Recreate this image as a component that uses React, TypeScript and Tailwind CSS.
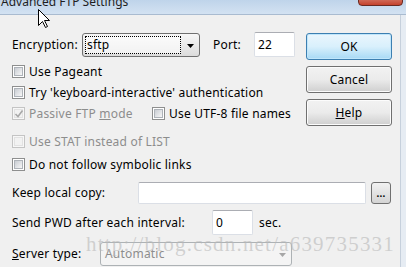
import React from "react";

function CheckBox({ checked, disabled }: { checked?: boolean; disabled?: boolean }) {
  return (
    <span
      className={`relative flex h-[13px] w-[13px] shrink-0 items-center justify-center border ${
        disabled ? "border-[#c4c4c4] bg-[#f7f7f7]" : "border-[#8e8f8f] bg-white"
      }`}
    >
      <span
        className={`h-[9px] w-[9px] border ${
          disabled
            ? "border-[#e2e2e2] bg-[#f2f2f2]"
            : "border-[#aeb3b9] bg-gradient-to-br from-[#c9cdd3] to-[#f7f7f7]"
        }`}
      />
      {checked && (
        <svg className="absolute left-[1px] top-[1px]" width="10" height="10" viewBox="0 0 10 10">
          <path d="M1.5 5 L4 7.5 L8.5 1.5" fill="none" stroke={disabled ? "#a8a8a8" : "#1c1c1c"} strokeWidth="1.6" />
        </svg>
      )}
    </span>
  );
}

function CheckRow({
  children,
  checked,
  disabled,
  className = "",
}: {
  children: React.ReactNode;
  checked?: boolean;
  disabled?: boolean;
  className?: string;
}) {
  return (
    <div className={`flex h-[21px] items-center gap-[4px] ${disabled ? "text-[#8d8d8d]" : ""} ${className}`}>
      <CheckBox checked={checked} disabled={disabled} />
      <span>{children}</span>
    </div>
  );
}

function WinButton({ children, primary }: { children: React.ReactNode; primary?: boolean }) {
  return (
    <div
      className={`flex h-[27px] w-[86px] items-center justify-center rounded-[3px] border ${
        primary
          ? "border-[#3c7fb1] bg-gradient-to-b from-[#eaf6fd] via-[#d9f0fc] to-[#a7d9f5] shadow-[inset_0_0_0_1px_#c0e6fb]"
          : "border-[#707070] bg-gradient-to-b from-[#f2f2f2] via-[#ebebeb] to-[#cfcfcf] shadow-[inset_0_0_0_1px_#fcfcfc]"
      }`}
    >
      {children}
    </div>
  );
}

function TextBox({ value, className = "" }: { value?: string; className?: string }) {
  return (
    <div
      className={`flex items-center rounded-[2px] border border-[#dbdfe6] border-t-[#abadb3] bg-white px-[3px] ${className}`}
    >
      {value}
    </div>
  );
}

export default function App() {
  return (
    <div className="relative h-[267px] w-[406px] overflow-hidden bg-[#f0f0f0] font-['Noto_Sans',sans-serif] text-[12px] leading-none tracking-[0.2px] text-black">
      {/* title bar */}
      <div className="relative h-[15px] border-b border-[#a9bbd0] bg-gradient-to-b from-[#bfd4ea] to-[#d3e2f2]">
        <div className="absolute left-[1px] top-[-4px] text-[12px] tracking-normal text-[#1e1e1e]">Advanced FTP Settings</div>
        <div className="absolute right-[3px] top-[-6px] h-[12px] w-[45px] rounded-[4px] border border-[#6a2a22] bg-gradient-to-b from-[#d98a7c] to-[#c4412c]" />
      </div>

      <div className="flex h-[252px]">
        <div className="flex-1">
          <div className="flex pt-[17px]">
            {/* left column */}
            <div className="w-[306px] pl-[12px]">
              <div className="flex h-[25px] items-center">
                <span className="w-[70px]">Encryption:</span>
                <div className="relative flex h-[24px] w-[118px] items-center rounded-[3px] border border-[#707070] bg-gradient-to-b from-[#f7f7f7] to-[#dcdcdc]">
                  <div className="ml-[2px] flex h-[18px] w-[96px] items-center border border-dotted border-black bg-white/60 pl-[1px]">
                    sftp
                  </div>
                  <svg className="absolute right-[4px] top-[10px]" width="8" height="4" viewBox="0 0 8 4">
                    <path d="M0 0 H7 L3.5 4 Z" fill="#000" />
                  </svg>
                </div>
                <span className="ml-[13px] w-[41px]">Port:</span>
                <TextBox value="22" className="h-[25px] w-[41px]" />
              </div>

              <CheckRow className="mt-[4px]">Use Pageant</CheckRow>
              <CheckRow>Try &apos;keyboard-interactive&apos; authentication</CheckRow>
              <div className="flex">
                <CheckRow checked disabled className="w-[140px]">
                  Passive FTP <span className="underline">m</span>ode
                </CheckRow>
                <CheckRow>Use UTF-8 file names</CheckRow>
              </div>
              <CheckRow disabled className="mt-[7px]">
                Use STAT instead of LIST
              </CheckRow>
              <CheckRow className="mt-[2px]">Do not follow symbolic links</CheckRow>
            </div>

            {/* buttons */}
            <div className="mt-[1px] flex w-[86px] flex-col gap-[6px]">
              <WinButton primary>OK</WinButton>
              <WinButton>Cancel</WinButton>
              <WinButton>
                <span>
                  <span className="underline">H</span>elp
                </span>
              </WinButton>
            </div>
          </div>

          <div className="pl-[12px]">
            <div className="mt-[7px] flex h-[22px] items-center">
              <span className="w-[126px]">Keep local copy:</span>
              <TextBox className="h-[22px] w-[228px]" />
              <div className="ml-[5px] flex h-[22px] w-[20px] items-end justify-center rounded-[3px] border border-[#707070] bg-gradient-to-b from-[#f2f2f2] to-[#d4d4d4] pb-[5px] text-[10px] font-bold leading-none">
                ...
              </div>
            </div>
            <div className="mt-[6px] flex h-[25px] items-center">
              <span className="w-[200px]">Send PWD after each interval:</span>
              <TextBox value="0" className="h-[25px] w-[41px]" />
              <span className="ml-[6px]">sec.</span>
            </div>
            <div className="mt-[7px] flex h-[24px] items-center">
              <span className="w-[88px]">
                <span className="underline">S</span>erver type:
              </span>
              <div className="relative flex h-[24px] w-[192px] items-center rounded-[3px] border border-[#adb2b5] bg-[#f4f4f4] pl-[4px] text-[#8d8d8d]">
                Automatic
                <svg className="absolute right-[4px] top-[10px]" width="8" height="4" viewBox="0 0 8 4">
                  <path d="M0 0 H7 L3.5 4 Z" fill="#a6a6a6" />
                </svg>
              </div>
            </div>
          </div>
        </div>
        {/* right frame edge */}
        <div className="w-[6px] border-l border-[#c6d0dc] bg-[#e6ecf3]" />
      </div>

      {/* watermark */}
      <div className="pointer-events-none absolute left-[86px] top-[234px] font-['Liberation_Serif',serif] text-[21px] tracking-[1.2px] text-[#b8b8b8]/60">
        http://blog.csdn.net/a639735331
      </div>

      {/* mouse cursor */}
      <svg className="absolute left-[38px] top-[9px]" width="13" height="20" viewBox="0 0 13 20">
        <path d="M0.5 0.5 L0.5 16.5 L4.5 12.5 L7.5 18.5 L9.5 17.5 L6.5 11.5 L11.5 11.5 Z" fill="#fff" stroke="#000" strokeWidth="1" />
      </svg>
    </div>
  );
}
